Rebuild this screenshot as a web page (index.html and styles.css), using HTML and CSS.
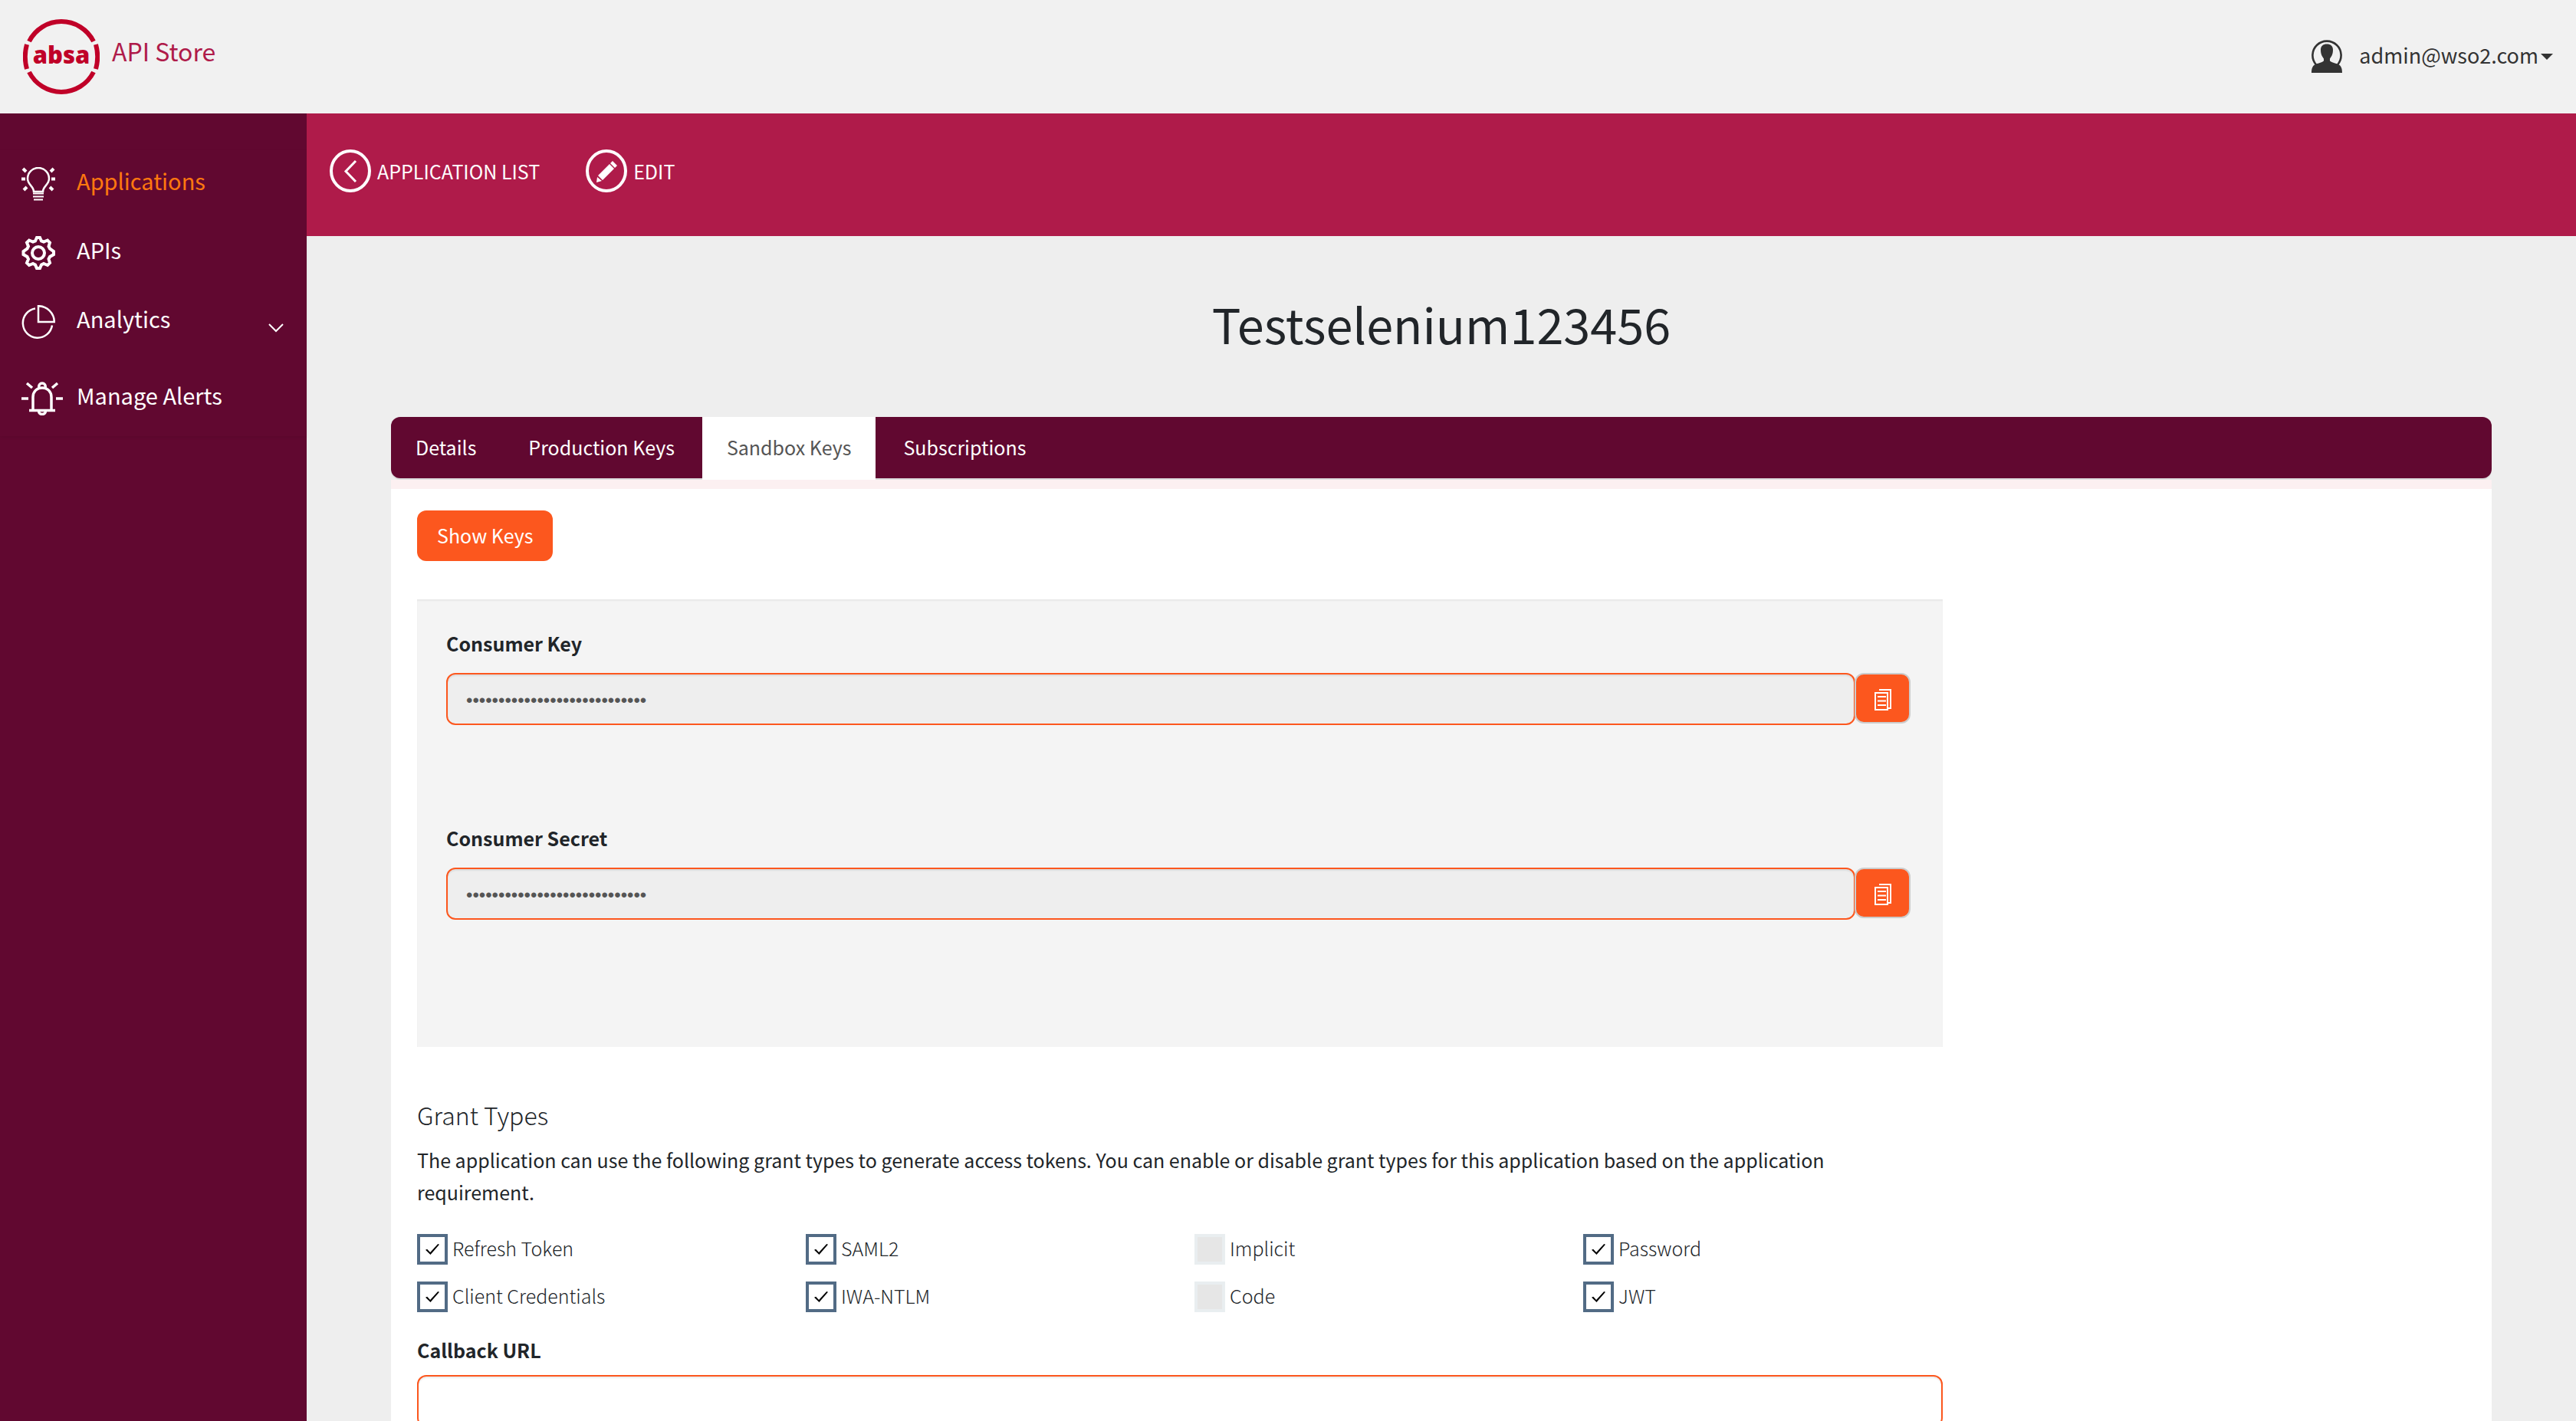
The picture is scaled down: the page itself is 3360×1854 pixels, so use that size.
FILE: index.html
```html
<!DOCTYPE html>
<html lang="en">
<head>
  <meta charset="utf-8">
  <title>API Store</title>
  <link rel="stylesheet" href="styles.css">
</head>
<body>
  <header class="header">
    <a class="brand" href="#">
      <svg class="brand-logo" viewBox="0 0 100 100" role="img" aria-label="absa">
        <g fill="none" stroke="#c00028" stroke-width="6">
          <path d="M8 30A47 47 0 0 1 92 30"/>
          <path d="M8 70A47 47 0 0 0 92 70"/>
          <path d="M5 34A60 60 0 0 0 5 66"/>
          <path d="M95 34A60 60 0 0 1 95 66"/>
        </g>
        <text class="logo-text" x="50" y="59" text-anchor="middle">absa</text>
      </svg>
      <span class="brand-name">API Store</span>
    </a>
    <button class="user" type="button">
      <svg class="user-icon" viewBox="0 0 40 45" aria-hidden="true">
        <path d="M6 34.500A18.600 18.600 0 1 1 34 34.500" fill="none" stroke="#333" stroke-width="2.600"/>
        <path d="M20 7.500c5 0 8 2.500 8 7.500 0 6-2 8.500-4 11.500v3c4 3 8 3 11 4.500 4 2 5 6 5 11H0c0-5 1-9 5-11 3-1.500 7-1.500 11-4.500v-3c-2-3-4-5.500-4-11.500 0-5 3-7.500 8-7.500z" fill="#333"/>
      </svg>
      <span>admin@wso2.com</span>
      <svg class="caret" viewBox="0 0 16 8" aria-hidden="true"><path d="M0 0h16L8 8z" fill="#333"/></svg>
    </button>
  </header>

  <div class="layout">
    <nav class="sidebar" aria-label="Main">
      <ul class="menu">
        <li><a class="menu-item current" href="#">
          <svg class="menu-icon" viewBox="0 0 44 44" aria-hidden="true">
            <path d="M16 32c0-7-8-9-8-17a14 14 0 0 1 28 0c0 8-8 10-8 17z"/>
            <path d="M15 34.500h14M15 38.500h14M16 42.500h12" stroke-width="2"/>
            <path d="M2 2l4 4M42 2l-4 4M0 15.500h5M39 15.500h5M3 30l4-4M41 30l-4-4" stroke-width="4"/>
          </svg>
          <span class="menu-label">Applications</span></a></li>
        <li><a class="menu-item" href="#">
          <svg class="menu-icon thick" viewBox="0 0 44 44" aria-hidden="true">
            <circle cx="22" cy="22" r="8"/>
            <path d="M20 2h4l2 4.500 3 1 5-2 3 3-1.500 5 1.500 3 5 3.500v4l-5 3-1.500 3L37 35l-3 3-5-2-3 1.500-2 4.500h-4l-2-4.500-3-1.500-5 2-3-3 2-5-1.500-3-5-3v-4l5-3.500 1.500-3-2-5 3-3 5 2 3-1z"/>
          </svg>
          <span class="menu-label">APIs</span></a></li>
        <li><a class="menu-item" href="#">
          <svg class="menu-icon" viewBox="0 0 44 44" aria-hidden="true">
            <path d="M18 4.500a19.200 19.200 0 1 0 22 22"/>
            <path d="M22 1.200a21 21 0 0 1 20.800 20.800H22z"/>
          </svg>
          <span class="menu-label">Analytics</span>
          <svg class="menu-chevron" viewBox="0 0 20 12" aria-hidden="true"><path d="M1 1l9 9 9-9"/></svg></a></li>
        <li><a class="menu-item last" href="#">
          <svg class="menu-icon wide" viewBox="0 0 54 44" aria-hidden="true">
            <path d="M15 37V20c0-7 5-12 12-12s12 5 12 12v17M10 37.500h34"/>
            <path d="M23 8c-2-8 10-8 8 0M22.500 38c0 6 9 6 9 0"/>
            <path d="M7 2l7 6M47 2l-7 6M0 22h9M45 22h9"/>
          </svg>
          <span class="menu-label">Manage Alerts</span></a></li>
      </ul>
    </nav>

    <main class="main">
      <div class="toolbar">
        <a class="tool" href="#">
          <svg class="tool-icon" viewBox="0 0 54 56" aria-hidden="true">
            <ellipse cx="27" cy="28" rx="25" ry="26"/>
            <path d="M34 15L21 28.500 34 42" stroke-width="3"/>
          </svg>
          <span>APPLICATION LIST</span>
        </a>
        <a class="tool" href="#">
          <svg class="tool-icon" viewBox="0 0 54 56" aria-hidden="true">
            <ellipse cx="27" cy="28" rx="25" ry="26"/>
            <path class="solid" d="M16 34l15-15 6 6-15 15zM32 18l3-3 6 6-3 3zM15 36l6 5-7 2z"/>
          </svg>
          <span>EDIT</span>
        </a>
      </div>

      <div class="content">
        <h1 class="title">Testselenium123456</h1>
        <div class="tabs" role="tablist">
          <a class="tab" role="tab" href="#">Details</a>
          <a class="tab" role="tab" href="#">Production Keys</a>
          <a class="tab active" role="tab" aria-selected="true" href="#">Sandbox Keys</a>
          <a class="tab" role="tab" href="#">Subscriptions</a>
        </div>

        <section class="card">
          <form class="keys">
            <button class="btn" type="button">Show Keys</button>

            <div class="panel">
              <div class="field">
                <label class="label" for="consumer-key">Consumer Key</label>
                <div class="input-group">
                  <input class="input secret" id="consumer-key" type="password" value="abcdefghijklmnopqrstuvwxyz12" readonly>
                  <button class="copy" type="button" aria-label="Copy consumer key">
                    <svg class="copy-icon" viewBox="0 0 22 28" aria-hidden="true"><path d="M6 1h15v24h-4M1 5h16v22H1zM4 10h11M4 15.500h11M4 21h11"/></svg>
                  </button>
                </div>
              </div>
              <div class="field">
                <label class="label" for="consumer-secret">Consumer Secret</label>
                <div class="input-group">
                  <input class="input secret" id="consumer-secret" type="password" value="abcdefghijklmnopqrstuvwxyz12" readonly>
                  <button class="copy" type="button" aria-label="Copy consumer secret">
                    <svg class="copy-icon" viewBox="0 0 22 28" aria-hidden="true"><path d="M6 1h15v24h-4M1 5h16v22H1zM4 10h11M4 15.500h11M4 21h11"/></svg>
                  </button>
                </div>
              </div>
            </div>

            <h2 class="subtitle">Grant Types</h2>
            <p class="help">The application can use the following grant types to generate access tokens. You can enable or disable grant types for this application based on the application requirement.</p>

            <div class="grants">
              <label class="grant"><input class="check" type="checkbox" checked><span>Refresh Token</span></label>
              <label class="grant"><input class="check" type="checkbox" checked><span>SAML2</span></label>
              <label class="grant"><input class="check" type="checkbox" disabled><span>Implicit</span></label>
              <label class="grant"><input class="check" type="checkbox" checked><span>Password</span></label>
              <label class="grant"><input class="check" type="checkbox" checked><span>Client Credentials</span></label>
              <label class="grant"><input class="check" type="checkbox" checked><span>IWA-NTLM</span></label>
              <label class="grant"><input class="check" type="checkbox" disabled><span>Code</span></label>
              <label class="grant"><input class="check" type="checkbox" checked><span>JWT</span></label>
            </div>

            <label class="label" for="callback">Callback URL</label>
            <input class="input callback" id="callback" type="text">
          </form>
        </section>
      </div>
    </main>
  </div>
</body>
</html>
```

FILE: styles.css
```css
:root {
  --plum: #610830;
  --red: #af1b4a;
  --orange: #fc571e;
  --ink: #212529;
}

* {
  box-sizing: border-box;
}

body {
  margin: 0;
  height: 100vh;
  display: flex;
  flex-direction: column;
  background: #eee;
  color: var(--ink);
  font: 400 25px/40px "Noto Sans CJK SC", "Noto Sans", sans-serif;
}

a {
  color: inherit;
  text-decoration: none;
}

button,
input {
  font: inherit;
  margin: 0;
}

svg {
  display: block;
  flex: none;
}

/* Header */
.header {
  flex: none;
  min-height: 148px;
  padding: 0 30px;
  display: flex;
  align-items: center;
  justify-content: space-between;
  background: #f1f1f1;
}

.brand {
  display: flex;
  align-items: center;
  gap: 16px;
  color: var(--red);
  font-size: 32px;
}

.brand-logo {
  width: 100px;
  height: 100px;
}

.logo-text {
  font: 800 31px "Open Sans", sans-serif;
  fill: #c00028;
}

.brand-name {
  padding-bottom: 16px;
}

.user {
  display: flex;
  align-items: center;
  padding: 0 0 4px;
  border: 0;
  background: none;
  color: #333;
  font-size: 27px;
}

.user-icon {
  width: 40px;
  height: 45px;
  margin-right: 22px;
}

.caret {
  width: 16px;
  height: 8px;
  margin: 4px 0 0 3px;
}

/* Sidebar */
.layout {
  flex: 1;
  min-height: 0;
  display: flex;
}

.sidebar {
  flex: none;
  width: 400px;
  padding-top: 47px;
  background: var(--plum);
}

.menu {
  margin: 0;
  padding: 0 0 4px;
  list-style: none;
  box-shadow: 0 2px 4px rgba(0, 0, 0, 0.06);
}

.menu-item {
  display: flex;
  align-items: center;
  height: 90px;
  padding: 0 30px 0 28px;
  color: #fff;
  font-size: 29px;
}

.menu-item.last {
  margin-top: 10px;
}

.menu-item.current {
  color: #ff780f;
}

.menu-icon {
  width: 44px;
  height: 44px;
  margin-right: 28px;
  fill: none;
  stroke: #fff;
  stroke-width: 2.5;
}

.menu-icon.thick {
  stroke-width: 4;
}

.menu-icon.wide {
  width: 54px;
  margin-right: 18px;
  stroke-width: 3.5;
}

.menu-label {
  flex: 1;
  padding-bottom: 10px;
}

.menu-chevron {
  width: 20px;
  height: 12px;
  margin-top: 16px;
  fill: none;
  stroke: #fff;
  stroke-width: 2;
}

/* Main column */
.main {
  flex: 1;
  min-width: 0;
  overflow-y: auto;
  scrollbar-width: none;
}

.toolbar {
  display: flex;
  align-items: center;
  gap: 60px;
  min-height: 160px;
  padding: 0 30px 10px;
  background: var(--red);
  color: #fff;
}

.tool {
  display: flex;
  align-items: center;
  gap: 8px;
}

.tool-icon {
  width: 54px;
  height: 56px;
  fill: none;
  stroke: #fff;
  stroke-width: 4;
}

.tool-icon .solid {
  fill: #fff;
  stroke: none;
}

.content {
  padding: 74px 110px 0;
}

.title {
  margin: 0 0 82px;
  font-size: 63px;
  font-weight: 400;
  line-height: 80px;
  text-align: center;
}

/* Tabs */
.tabs {
  display: flex;
  gap: 4px;
  height: 80px;
  margin-bottom: 2px;
  border-radius: 12px;
  background: var(--plum);
  box-shadow: 0 2px 0 #ddd;
  color: #fff;
}

.tab {
  height: 80px;
  padding: 0 32px;
  line-height: 78px;
}

.tab.active {
  height: 82px;
  background: #fff;
  color: #555;
}

.card {
  border-top: 12px solid #fcf0f1;
  background: #fff;
}

.keys {
  width: 75%;
  padding: 28px 31px 40px 34px;
}

.btn {
  height: 66px;
  padding: 0 26px 2px;
  border: 0;
  border-radius: 12px;
  background: var(--orange);
  color: #fff;
}

.panel {
  margin-top: 50px;
  padding: 37px 42px 39px 38px;
  background: #f4f4f4;
  box-shadow: inset 0 2px 2px rgba(0, 0, 0, 0.05);
}

.field {
  margin-bottom: 127px;
}

.field .label {
  margin-bottom: 19px;
}

.label {
  display: block;
  font-weight: 700;
}

.input-group {
  display: flex;
  align-items: flex-start;
}

.input {
  flex: 1;
  min-width: 0;
  height: 68px;
  padding: 0 24px;
  border: 2px solid var(--orange);
  border-radius: 12px;
  background: #eee;
  box-shadow: inset 0 2px 2px rgba(0, 0, 0, 0.08);
  color: #555;
}

.input.secret {
  padding-top: 4px;
  font: 24px "Liberation Sans", sans-serif;
}

.input.callback {
  width: 100%;
  margin-top: 13px;
  background: #fff;
}

.copy {
  display: flex;
  align-items: center;
  justify-content: center;
  width: 73px;
  height: 66px;
  margin-left: -1px;
  padding: 4px 0 0;
  border: 2px solid #ccc;
  border-radius: 12px;
  background: var(--orange);
}

.copy-icon {
  width: 22px;
  height: 28px;
  fill: none;
  stroke: #fff;
  stroke-width: 2;
}

/* Grant types */
.subtitle {
  margin: 64px 0 14px;
  font-size: 32px;
  font-weight: 300;
  line-height: 48px;
}

.help {
  margin: 0 0 34px;
  line-height: 42px;
}

.grants {
  display: grid;
  grid-template-columns: repeat(4, 1fr);
  gap: 22px 0;
  margin: 0 -38px 29px 0;
  font-weight: 300;
}

.grant {
  display: flex;
  gap: 6px;
  height: 40px;
  line-height: 36px;
}

.check {
  appearance: none;
  display: grid;
  place-items: center;
  width: 40px;
  height: 40px;
  border: 4px solid #526b85;
  background: #fff;
}

.check:checked::before {
  content: "";
  width: 18px;
  height: 14px;
  background: #000;
  clip-path: polygon(0 55%, 12% 48%, 34% 78%, 90% 0, 100% 6%, 36% 100%);
}

.check:disabled {
  border-color: #e9eef0;
  background: #e6e6e6;
}
```
